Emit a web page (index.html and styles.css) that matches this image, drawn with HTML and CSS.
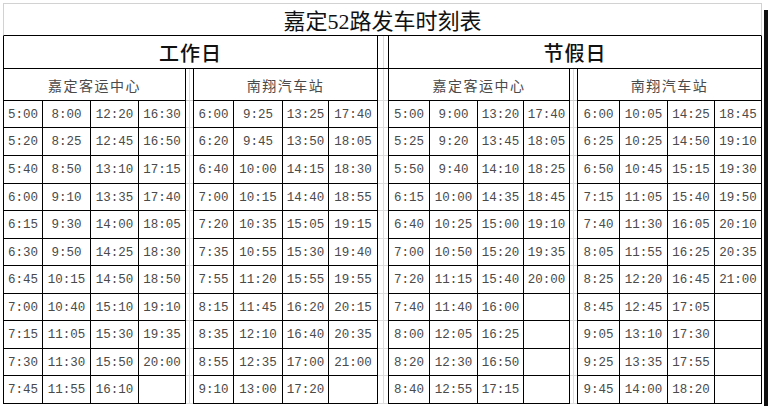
FILE: index.html
```html
<!DOCTYPE html>
<html lang="zh-CN">
<head>
<meta charset="utf-8">
<title>嘉定52路发车时刻表</title>
<link rel="stylesheet" href="styles.css">
</head>
<body>
<div class="page">
  <div class="sheet">
    <div class="title">嘉定52路发车时刻表</div>
    <div class="sections">
      <div class="section sec-left">
        <div class="sec-head">工作日</div>
        <div class="sec-body">
          <div class="sub sub-a">
            <div class="station">嘉定客运中心</div>
            <div>5:00</div><div>8:00</div><div>12:20</div><div>16:30</div>
            <div>5:20</div><div>8:25</div><div>12:45</div><div>16:50</div>
            <div>5:40</div><div>8:50</div><div>13:10</div><div>17:15</div>
            <div>6:00</div><div>9:10</div><div>13:35</div><div>17:40</div>
            <div>6:15</div><div>9:30</div><div>14:00</div><div>18:05</div>
            <div>6:30</div><div>9:50</div><div>14:25</div><div>18:30</div>
            <div>6:45</div><div>10:15</div><div>14:50</div><div>18:50</div>
            <div>7:00</div><div>10:40</div><div>15:10</div><div>19:10</div>
            <div>7:15</div><div>11:05</div><div>15:30</div><div>19:35</div>
            <div>7:30</div><div>11:30</div><div>15:50</div><div>20:00</div>
            <div>7:45</div><div>11:55</div><div>16:10</div><div></div>
          </div>
          <div class="gap inner-gap">
            <div></div><div></div><div></div><div></div><div></div><div></div><div></div><div></div><div></div><div></div><div></div><div></div>
          </div>
          <div class="sub sub-b">
            <div class="station">南翔汽车站</div>
            <div>6:00</div><div>9:25</div><div>13:25</div><div>17:40</div>
            <div>6:20</div><div>9:45</div><div>13:50</div><div>18:05</div>
            <div>6:40</div><div>10:00</div><div>14:15</div><div>18:30</div>
            <div>7:00</div><div>10:15</div><div>14:40</div><div>18:55</div>
            <div>7:20</div><div>10:35</div><div>15:05</div><div>19:15</div>
            <div>7:35</div><div>10:55</div><div>15:30</div><div>19:40</div>
            <div>7:55</div><div>11:20</div><div>15:55</div><div>19:55</div>
            <div>8:15</div><div>11:45</div><div>16:20</div><div>20:15</div>
            <div>8:35</div><div>12:10</div><div>16:40</div><div>20:35</div>
            <div>8:55</div><div>12:35</div><div>17:00</div><div>21:00</div>
            <div>9:10</div><div>13:00</div><div>17:20</div><div></div>
          </div>
        </div>
      </div>
      <div class="gap outer-gap">
        <div></div><div></div><div></div><div></div><div></div><div></div><div></div><div></div><div></div><div></div><div></div><div></div><div></div>
      </div>
      <div class="section sec-right">
        <div class="sec-head">节假日</div>
        <div class="sec-body">
          <div class="sub sub-c">
            <div class="station">嘉定客运中心</div>
            <div>5:00</div><div>9:00</div><div>13:20</div><div>17:40</div>
            <div>5:25</div><div>9:20</div><div>13:45</div><div>18:05</div>
            <div>5:50</div><div>9:40</div><div>14:10</div><div>18:25</div>
            <div>6:15</div><div>10:00</div><div>14:35</div><div>18:45</div>
            <div>6:40</div><div>10:25</div><div>15:00</div><div>19:10</div>
            <div>7:00</div><div>10:50</div><div>15:20</div><div>19:35</div>
            <div>7:20</div><div>11:15</div><div>15:40</div><div>20:00</div>
            <div>7:40</div><div>11:40</div><div>16:00</div><div></div>
            <div>8:00</div><div>12:05</div><div>16:25</div><div></div>
            <div>8:20</div><div>12:30</div><div>16:50</div><div></div>
            <div>8:40</div><div>12:55</div><div>17:15</div><div></div>
          </div>
          <div class="gap inner-gap">
            <div></div><div></div><div></div><div></div><div></div><div></div><div></div><div></div><div></div><div></div><div></div><div></div>
          </div>
          <div class="sub sub-d">
            <div class="station">南翔汽车站</div>
            <div>6:00</div><div>10:05</div><div>14:25</div><div>18:45</div>
            <div>6:25</div><div>10:25</div><div>14:50</div><div>19:10</div>
            <div>6:50</div><div>10:45</div><div>15:15</div><div>19:30</div>
            <div>7:15</div><div>11:05</div><div>15:40</div><div>19:50</div>
            <div>7:40</div><div>11:30</div><div>16:05</div><div>20:10</div>
            <div>8:05</div><div>11:55</div><div>16:25</div><div>20:35</div>
            <div>8:25</div><div>12:20</div><div>16:45</div><div>21:00</div>
            <div>8:45</div><div>12:45</div><div>17:05</div><div></div>
            <div>9:05</div><div>13:10</div><div>17:30</div><div></div>
            <div>9:25</div><div>13:35</div><div>17:55</div><div></div>
            <div>9:45</div><div>14:00</div><div>18:20</div><div></div>
          </div>
        </div>
      </div>
    </div>
  </div>
  <div class="edge"></div>
</div>
</body>
</html>
```

FILE: styles.css
```css
* { box-sizing: border-box; }
html, body { margin: 0; padding: 0; background: #fff; }
body { width: 768px; height: 406px; overflow: hidden; }

.page {
  display: flex;
  height: 406px;
  padding-left: 3px;
}

.sheet {
  width: 759px;
  padding-top: 3px;
}

.edge {
  margin-left: 2px;
  width: 4px;
  margin-top: 10px;
  background: #111;
}

.title {
  height: 33px;
  border: 1px solid #d2d2d2;
  border-bottom: 1px solid #000;
  display: flex;
  align-items: center;
  justify-content: center;
  font-family: "Liberation Serif", "Noto Sans CJK SC", serif;
  font-size: 22px;
  letter-spacing: 0;
  color: #111;
  padding-bottom: 2px;
}

.sections { display: flex; }

.sec-left { width: 375px; }
.sec-right { width: 374px; }

.sec-head {
  height: 33px;
  border: 1px solid #000;
  border-top: none;
  display: flex;
  align-items: center;
  justify-content: center;
  font-family: "Noto Sans CJK SC", sans-serif;
  font-size: 20px;
  font-weight: 500;
  letter-spacing: 1px;
  color: #111;
}

.sec-body { display: flex; }

.sub {
  display: grid;
  grid-template-rows: 32px 27px 28px 28px 27px 28px 27px 28px 27px 28px 27px 28px;
  border-left: 1px solid #000;
}
.sub-a { grid-template-columns: 39px 48px 48px 47px; }
.sub-b { grid-template-columns: 40px 49px 46px 49px; }
.sub-c { grid-template-columns: 41px 48px 46px 46px; }
.sub-d { grid-template-columns: 42px 48px 47px 47px; }

.sub > div {
  border-right: 1px solid #000;
  border-bottom: 1px solid #000;
  display: flex;
  align-items: center;
  justify-content: center;
  font-family: "Liberation Mono", monospace;
  font-size: 12.5px;
  color: #4a4a4a;
  padding-top: 1px;
  white-space: nowrap;
}

.sub > .station {
  grid-column: 1 / -1;
  font-family: "Noto Sans CJK SC", sans-serif;
  font-size: 14px;
  letter-spacing: 1.5px;
  color: #4a4a4a;
  padding-top: 0;
}

.gap {
  display: grid;
  background: linear-gradient(to right, transparent 3px, #dcdcdc 3px, #dcdcdc 4px, transparent 4px);
}
.inner-gap {
  width: 7px;
  grid-template-rows: 32px 27px 28px 28px 27px 28px 27px 28px 27px 28px 27px 28px;
}
.outer-gap {
  width: 10px;
  grid-template-rows: 33px 32px 27px 28px 28px 27px 28px 27px 28px 27px 28px 27px 28px;
  background: linear-gradient(to right, transparent 5px, #dcdcdc 5px, #dcdcdc 6px, transparent 6px);
}
.gap > div { border-bottom: 1px solid #dcdcdc; }
.outer-gap > div:first-child { border-bottom-color: #000; }
.sec-body .inner-gap > div:first-child { border-bottom-color: #ccc; }
```
